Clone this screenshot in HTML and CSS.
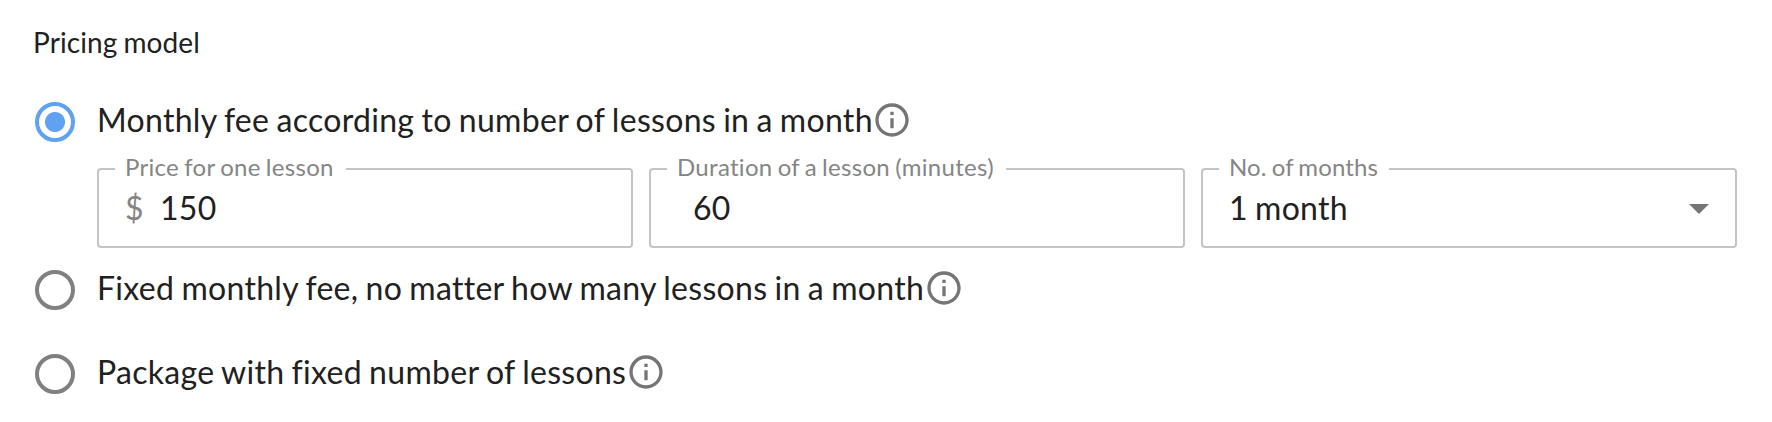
FILE: index.html
```html
<!DOCTYPE html>
<html lang="en">
<head>
  <meta charset="UTF-8" />
  <meta name="viewport" content="width=device-width, initial-scale=1.0"/>
  <title>Pricing model</title>
  <link rel="stylesheet" href="styles.css">
</head>
<body>

  <form class="pricing">
    <h2 class="pricing-title">Pricing model</h2>

    <div class="option">
      <input type="radio" class="radio" name="pricing" id="monthly" checked>
      <label class="option-label" for="monthly">Monthly fee according to number of lessons in a month</label>
      <svg class="info" viewBox="0 0 24 24"><path d="M11 7h2v2h-2zm0 4h2v6h-2zm1-9C6.480 2 2 6.480 2 12s4.480 10 10 10 10-4.480 10-10S17.520 2 12 2zm0 18c-4.410 0-8-3.590-8-8s3.590-8 8-8 8 3.590 8 8-3.590 8-8 8z"/></svg>
    </div>

    <div class="fields">
      <fieldset class="field">
        <legend>Price for one lesson</legend>
        <div class="field-row">
          <span class="prefix">$</span>
          <input type="text" class="value" value="150">
        </div>
      </fieldset>
      <fieldset class="field">
        <legend>Duration of a lesson (minutes)</legend>
        <div class="field-row duration">
          <input type="text" class="value" value="60">
        </div>
      </fieldset>
      <fieldset class="field months">
        <legend>No. of months</legend>
        <div class="field-row">
          <span class="value">1 month</span>
          <svg class="arrow" viewBox="0 0 24 24"><path d="M7 10l5 5 5-5z"/></svg>
        </div>
      </fieldset>
    </div>

    <div class="option">
      <input type="radio" class="radio" name="pricing" id="fixed">
      <label class="option-label" for="fixed">Fixed monthly fee, no matter how many lessons in a month</label>
      <svg class="info" viewBox="0 0 24 24"><path d="M11 7h2v2h-2zm0 4h2v6h-2zm1-9C6.480 2 2 6.480 2 12s4.480 10 10 10 10-4.480 10-10S17.520 2 12 2zm0 18c-4.410 0-8-3.590-8-8s3.590-8 8-8 8 3.590 8 8-3.590 8-8 8z"/></svg>
    </div>

    <div class="option">
      <input type="radio" class="radio" name="pricing" id="package">
      <label class="option-label" for="package">Package with fixed number of lessons</label>
      <svg class="info" viewBox="0 0 24 24"><path d="M11 7h2v2h-2zm0 4h2v6h-2zm1-9C6.480 2 2 6.480 2 12s4.480 10 10 10 10-4.480 10-10S17.520 2 12 2zm0 18c-4.410 0-8-3.590-8-8s3.590-8 8-8 8 3.590 8 8-3.590 8-8 8z"/></svg>
    </div>
  </form>

</body>
</html>
```
FILE: styles.css
```css
* {
  box-sizing: border-box;
}

body {
  margin: 0;
  background: #fff;
  color: #212121;
  font-family: Lato, sans-serif;
  font-size: 32px;
  letter-spacing: 0.3px;
  word-spacing: -1.3px;
}

.pricing {
  padding: 25px 35px 0 33px;
}

.pricing-title {
  margin: 0;
  height: 55px;
  font-size: 28px;
  font-weight: 400;
  letter-spacing: 0.1px;
  line-height: 34px;
}

.option {
  display: flex;
  align-items: center;
  height: 84px;
}

.radio {
  appearance: none;
  flex: none;
  width: 40px;
  height: 40px;
  margin: 0 22px 0 2px;
  border: 4px solid #808080;
  border-radius: 50%;
}

.radio:checked {
  border-color: #5ea2f1;
  background: radial-gradient(circle, #5ea2f1 9.5px, transparent 10.5px);
}

.option-label {
  padding-bottom: 4px;
  line-height: 40px;
}

.info {
  width: 40px;
  height: 40px;
  margin: 0 0 4px -0.5px;
  fill: #757575;
}

.fields {
  display: grid;
  grid-template-columns: repeat(3, 1fr);
  gap: 16px;
  margin: -9px 0 0 64px;
}

.field {
  min-width: 0;
  height: 93px;
  margin: 0;
  padding: 0 12px 14px 16px;
  border: 2px solid #c4c4c4;
  border-radius: 4px;
}

.field legend {
  padding: 0 12px 4px 10px;
  color: #858585;
  font-size: 24px;
  line-height: 24px;
}

.months legend {
  padding-right: 11px;
  letter-spacing: 0.15px;
}

.field-row {
  display: flex;
  align-items: center;
  height: 49px;
  padding-left: 10px;
}

.duration {
  padding-left: 26px;
}

.prefix {
  width: 35px;
  color: #858585;
}

.value {
  flex: 1;
  min-width: 0;
  padding: 0;
  border: none;
  outline: none;
  background: none;
  color: inherit;
  font: inherit;
  letter-spacing: inherit;
}

.arrow {
  width: 48px;
  height: 48px;
  fill: #757575;
}
```
